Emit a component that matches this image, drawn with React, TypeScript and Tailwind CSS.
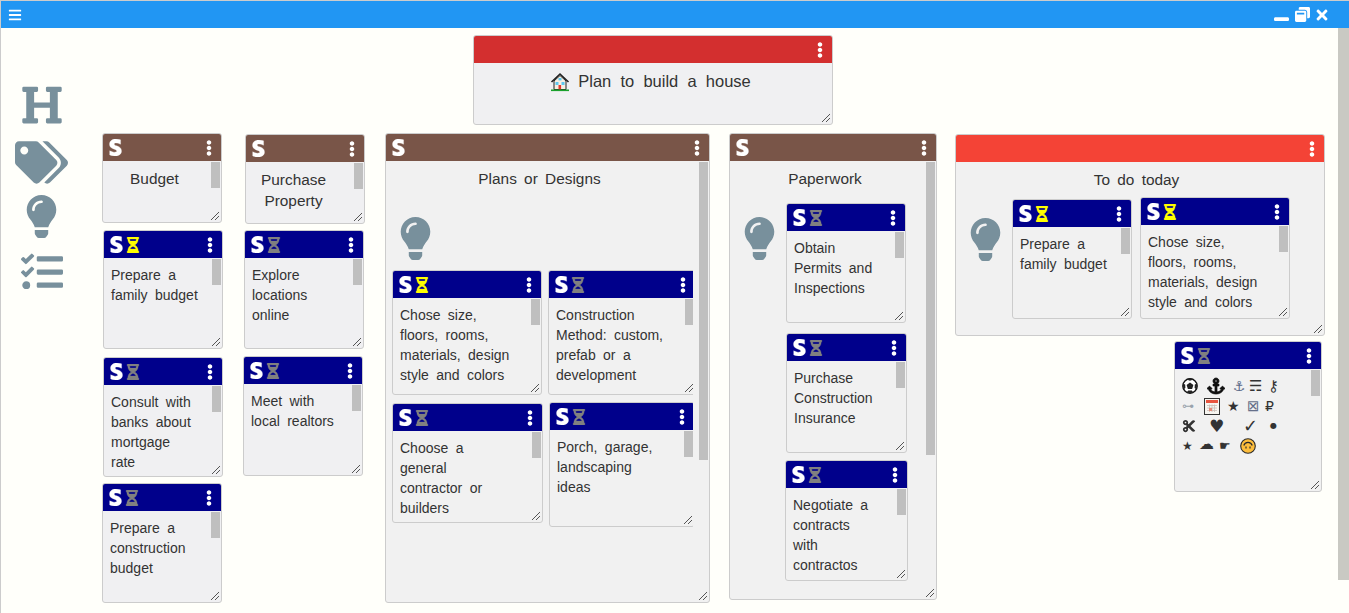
import type { ReactNode } from 'react';
import {
  FaAnchor,
  FaBars,
  FaCut,
  FaEllipsisV,
  FaHeading,
  FaHourglassHalf,
  FaLightbulb,
  FaStripeS,
  FaTags,
  FaTasks,
  FaTimes,
  FaWindowMinimize,
  FaWindowRestore,
} from 'react-icons/fa';

function ResizeGrip() {
  return (
    <svg width="10" height="10" viewBox="0 0 10 10" className="absolute bottom-[1px] right-[1px]">
      <path d="M1 9 L9 1 M5 9 L9 5" stroke="#555" strokeWidth="1" fill="none" />
    </svg>
  );
}

type CardProps = {
  className: string;
  head: string;
  s?: boolean;
  glass?: 'yellow' | 'gray';
  thumb?: string;
  bg?: string;
  children: ReactNode;
};

function Card({ className, head, s = true, glass, thumb, bg = 'bg-[#f1f1f1]', children }: CardProps) {
  return (
    <div className={`relative flex shrink-0 flex-col overflow-hidden rounded-[3px] border border-[#cccccc] ${bg} ${className}`}>
      <div className={`flex h-[27px] shrink-0 items-center pl-[4px] pr-[4px] text-white ${head}`}>
        {s && <FaStripeS size={17} strokeWidth={8} />}
        {glass && <FaHourglassHalf size={16} strokeWidth={10} className={glass === 'yellow' ? 'text-[#ffff00]' : 'text-[#808080]'} />}
        <FaEllipsisV size={16} className="ml-auto" />
      </div>
      {children}
      {thumb && <div className={`absolute right-[1px] top-[28px] w-[9px] bg-[#bfbfbf] ${thumb}`} />}
      <ResizeGrip />
    </div>
  );
}

function Note({ className, glass, lines, bg }: { className: string; glass: 'yellow' | 'gray'; lines: string[]; bg?: string }) {
  return (
    <Card className={className} head="bg-[#00008b]" glass={glass} thumb="h-[26px]" bg={bg}>
      <div className="whitespace-pre pl-[7px] pt-[7px] text-[14px] leading-[20px] text-[#333]">
        {lines.map((line) => (
          <div key={line}>{line}</div>
        ))}
      </div>
    </Card>
  );
}

function Title({ lines, className = '' }: { lines: string[]; className?: string }) {
  return (
    <div className={`pt-[7px] text-center text-[15.4px] leading-[21px] text-[#333] [word-spacing:3px] ${className}`}>
      {lines.map((line) => (
        <div key={line}>{line}</div>
      ))}
    </div>
  );
}

function Bulb({ className = '' }: { className?: string }) {
  return <FaLightbulb size={43} className={`shrink-0 text-[#78909c] ${className}`} />;
}

function House() {
  return (
    <svg width="20" height="20" viewBox="0 0 20 20" className="mr-[8px]">
      <path d="M1.5 10 L10 2 L18.5 10" fill="none" stroke="#222" strokeWidth="1.6" />
      <path d="M4 9 L10 3.5 L16 9 V17.5 H4 Z" fill="#f6efe2" stroke="#222" strokeWidth="1" />
      <rect x="5.5" y="10" width="3" height="3" fill="#5ec8f0" />
      <rect x="11.5" y="10" width="3" height="3" fill="#5ec8f0" />
      <rect x="8.5" y="13" width="2.6" height="4.5" fill="#e5392f" />
      <rect x="8.5" y="6" width="3" height="2.4" fill="#5ec8f0" />
      <rect x="1" y="17.5" width="18" height="1.6" fill="#1aa12c" />
    </svg>
  );
}

function Ball() {
  return (
    <svg width="16" height="16" viewBox="0 0 16 16">
      <circle cx="8" cy="8" r="7.2" fill="#fff" stroke="#111" strokeWidth="1.4" />
      <path d="M8 4.4 L11.4 6.9 L10.1 10.9 H5.9 L4.6 6.9 Z" fill="#222" />
      <path d="M4.6 1.6 L8 2.8 L11.4 1.6 L9.5 0.6 H6.5 Z M0.8 5.6 L3.2 6.4 L3.4 10 L1.4 11.4 Z M15.2 5.6 L12.8 6.4 L12.6 10 L14.6 11.4 Z M4.6 14.4 L6.2 12.4 H9.8 L11.4 14.4 L8 15.6 Z" fill="#222" />
    </svg>
  );
}

function CalendarGlyph() {
  return (
    <svg width="16" height="17" viewBox="0 0 16 17">
      <rect x="0.5" y="0.5" width="15" height="16" fill="#f7f5f0" stroke="#333" />
      <rect x="2" y="2" width="12" height="3" fill="#e8553f" />
      <path d="M3 7.5 H13 M3 10 H13 M3 12.5 H13 M5.5 6.5 V14 M8 6.5 V14 M10.5 6.5 V14" stroke="#c9bfb8" strokeWidth="0.8" />
      <rect x="5" y="10" width="3" height="3" fill="#e58b7a" />
    </svg>
  );
}

function UpsideDownFace() {
  return (
    <svg width="16" height="16" viewBox="0 0 16 16">
      <circle cx="8" cy="8" r="7.3" fill="#fdbd3c" stroke="#2b2b2b" strokeWidth="1.1" />
      <path d="M3.8 7.5 A4.4 4.4 0 0 1 12.2 7.5" fill="none" stroke="#2b2b2b" strokeWidth="1.2" />
      <path d="M6 8.5 V10.5 M10 8.5 V10.5" stroke="#2b2b2b" strokeWidth="1.2" />
    </svg>
  );
}

function Glyphs() {
  return (
    <div className="pl-[7px] pt-[7px] font-['DejaVu_Sans',sans-serif] text-[#333]">
      <div className="flex h-[20px] items-center">
        <Ball />
        <FaAnchor size={18} strokeWidth={24} className="ml-[9px] text-[#111]" />
        <span className="ml-[8px] w-[9px] text-[14px] leading-[20px] text-[#5b6b8a]">⚓︎</span>
        <span className="ml-[7px] w-[13px] text-[15px] leading-[20px]">☴</span>
        <span className="ml-[6px] text-[15px] leading-[20px]">⚷</span>
      </div>
      <div className="flex h-[20px] items-center">
        <span className="w-[13px] text-[12px] text-[#9aa3ad]">⊶</span>
        <div className="ml-[9px]">
          <CalendarGlyph />
        </div>
        <span className="ml-[7px] w-[13px] text-[14px] leading-[20px]">★</span>
        <span className="ml-[7px] w-[12px] text-[15px] leading-[20px] text-[#66708a]">⊠</span>
        <span className="ml-[6px] text-[14px] leading-[20px]">₽</span>
      </div>
      <div className="flex h-[20px] items-center">
        <FaCut size={14} />
        <span className="ml-[13px] w-[16px] text-[17px] leading-[20px]">♥</span>
        <span className="ml-[18px] w-[13px] text-[18px] leading-[20px]">✓</span>
        <span className="ml-[14px] text-[8px]">●</span>
      </div>
      <div className="flex h-[20px] items-center">
        <span className="w-[12px] text-[12px]">★</span>
        <span className="-mt-[5px] ml-[5px] w-[15px] text-[15px] leading-[16px]">☁</span>
        <span className="ml-[5px] w-[14px] text-[13px] leading-[20px]">☛</span>
        <div className="ml-[7px]">
          <UpsideDownFace />
        </div>
      </div>
    </div>
  );
}

export default function App() {
  return (
    <div className="relative flex h-screen flex-col overflow-hidden border-l border-t border-[#cccccc] bg-[#fffffa] font-['Liberation_Sans',Arial,sans-serif] [word-spacing:3.5px]">
      <div className="flex h-[27px] shrink-0 items-center bg-[#2196f3] pl-[7px] pr-[19px] text-white">
        <FaBars size={14} />
        <FaWindowMinimize size={15} className="ml-auto" />
        <FaWindowRestore size={15} className="ml-[6px]" />
        <FaTimes size={16} className="ml-[4px]" />
      </div>

      <div className="flex min-h-0 flex-1">
        <div className="flex w-[101px] shrink-0 flex-col text-[#78909c]">
          <FaHeading size={42} className="ml-[20px] mt-[56px]" />
          <FaTags size={53} className="ml-[14px] mt-[10px]" />
          <FaLightbulb size={43} className="ml-[19px] mt-[6px]" />
          <FaTasks size={42} className="ml-[20px] mt-[13px]" />
        </div>

        <div className="flex flex-col">
          <Card className="ml-[371px] mt-[7px] h-[90px] w-[360px]" head="bg-[#d32f2f]" s={false} bg="bg-[#f0f0f2]">
            <div className="flex items-center justify-center pr-[5px] pt-[8px] text-[16.5px] leading-[21px] text-[#333] [word-spacing:4.6px]">
              <House />
              Plan to build a house
            </div>
          </Card>

          <div className="mt-[8px] flex items-start">
            <div className="flex w-[141px] shrink-0 flex-col">
              <Card className="h-[90px] w-[120px]" head="bg-[#795548]" thumb="h-[26px]" bg="bg-[#f0f0f2]">
                <Title lines={['Budget']} className="pr-[15px]" />
              </Card>
              <Note className="ml-[1px] mt-[7px] h-[119px] w-[120px]" glass="yellow" lines={['Prepare a', 'family budget']} bg="bg-[#f0f0f2]" />
              <Note className="ml-[1px] mt-[8px] h-[120px] w-[120px]" glass="gray" lines={['Consult with', 'banks about', 'mortgage', 'rate']} bg="bg-[#f0f0f2]" />
              <Note className="mt-[6px] h-[120px] w-[120px]" glass="gray" lines={['Prepare a', 'construction', 'budget']} bg="bg-[#f0f0f2]" />
            </div>

            <div className="flex w-[142px] shrink-0 flex-col">
              <Card className="ml-[2px] mt-[1px] h-[90px] w-[120px]" head="bg-[#795548]" thumb="h-[26px]" bg="bg-[#f0f0f2]">
                <Title lines={['Purchase', 'Property']} className="pr-[23px]" />
              </Card>
              <Note className="ml-[1px] mt-[6px] h-[119px] w-[120px]" glass="gray" lines={['Explore', 'locations', 'online']} bg="bg-[#f0f0f2]" />
              <Note className="mt-[7px] h-[120px] w-[120px]" glass="gray" lines={['Meet with', 'local realtors']} bg="bg-[#f0f0f2]" />
            </div>

            <Card className="h-[470px] w-[325px]" head="bg-[#795548]" thumb="h-[298px]">
              <div className="w-[307px] overflow-hidden">
                <Title lines={['Plans or Designs']} />
                <Bulb className="ml-[8px] mt-[28px]" />
                <div className="ml-[6px] mt-[10px] flex items-start">
                  <Note className="h-[125px] w-[150px]" glass="yellow" lines={['Chose size,', 'floors, rooms,', 'materials, design', 'style and colors']} />
                  <Note className="ml-[6px] h-[125px] w-[148px]" glass="gray" lines={['Construction', 'Method: custom,', 'prefab or a', 'development']} />
                </div>
                <div className="ml-[6px] mt-[7px] flex items-start">
                  <Note className="mt-[1px] h-[120px] w-[151px]" glass="gray" lines={['Choose a', 'general', 'contractor or', 'builders']} />
                  <Note className="ml-[6px] h-[125px] w-[146px]" glass="gray" lines={['Porch, garage,', 'landscaping', 'ideas']} />
                </div>
              </div>
            </Card>

            <Card className="ml-[19px] h-[467px] w-[208px]" head="bg-[#795548]" thumb="h-[293px]">
              <Title lines={['Paperwork']} className="pr-[16px]" />
              <div className="mt-[14px] flex items-start">
                <Bulb className="ml-[8px] mt-[14px]" />
                <div className="ml-[5px] flex flex-col">
                  <Note className="h-[120px] w-[120px]" glass="gray" lines={['Obtain', 'Permits and', 'Inspections']} />
                  <Note className="mt-[10px] h-[120px] w-[121px]" glass="gray" lines={['Purchase', 'Construction', 'Insurance']} />
                  <Note className="-ml-[1px] mt-[7px] h-[121px] w-[123px]" glass="gray" lines={['Negotiate a', 'contracts', 'with', 'contractos']} />
                </div>
              </div>
            </Card>

            <div className="ml-[18px] flex w-[370px] shrink-0 flex-col">
              <Card className="mt-[1px] h-[202px] w-[370px]" head="bg-[#f44336]" s={false}>
                <Title lines={['To do today']} className="pr-[7px]" />
                <div className="mt-[7px] flex items-start">
                  <Bulb className="ml-[8px] mt-[21px]" />
                  <Note className="ml-[5px] mt-[2px] h-[120px] w-[120px]" glass="yellow" lines={['Prepare a', 'family budget']} />
                  <Note className="ml-[8px] h-[122px] w-[150px]" glass="yellow" lines={['Chose size,', 'floors, rooms,', 'materials, design', 'style and colors']} />
                </div>
              </Card>
              <Card className="ml-[219px] mt-[5px] h-[151px] w-[148px]" head="bg-[#00008b]" glass="gray" thumb="h-[26px]">
                <Glyphs />
              </Card>
            </div>
          </div>
        </div>
      </div>

      <div className="absolute bottom-[33px] right-0 top-[27px] w-[11px] bg-[#c9c9c3]" />
    </div>
  );
}
